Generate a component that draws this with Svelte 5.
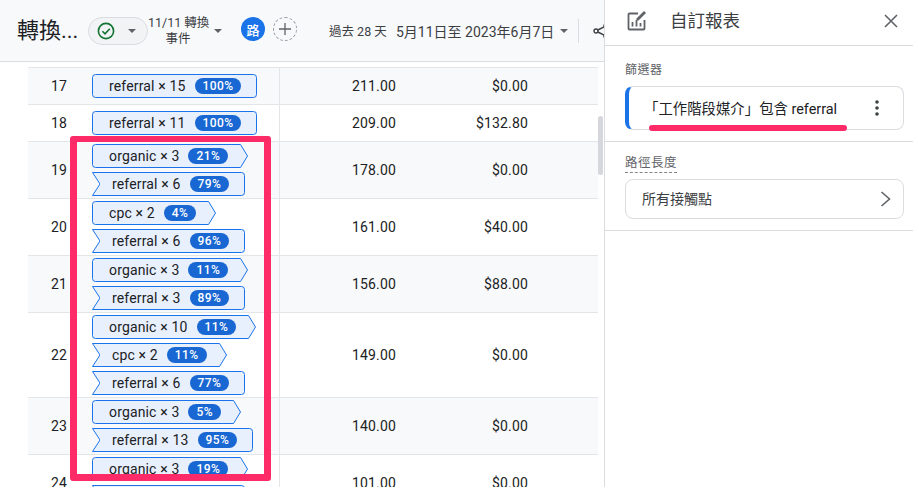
<script lang="ts">
	// chips: [source, count, percent]
	const rows = [
		{ n: 17, conv: '211.00', rev: '$0.00', path: [['referral', 15, '100%']] },
		{ n: 18, conv: '209.00', rev: '$132.80', path: [['referral', 11, '100%']] },
		{ n: 19, conv: '178.00', rev: '$0.00', path: [['organic', 3, '21%'], ['referral', 6, '79%']] },
		{ n: 20, conv: '161.00', rev: '$40.00', path: [['cpc', 2, '4%'], ['referral', 6, '96%']] },
		{ n: 21, conv: '156.00', rev: '$88.00', path: [['organic', 3, '11%'], ['referral', 3, '89%']] },
		{ n: 22, conv: '149.00', rev: '$0.00', path: [['organic', 10, '11%'], ['cpc', 2, '11%'], ['referral', 6, '77%']] },
		{ n: 23, conv: '140.00', rev: '$0.00', path: [['organic', 3, '5%'], ['referral', 13, '95%']] },
		{ n: 24, conv: '101.00', rev: '$0.00', path: [['organic', 3, '19%'], ['referral', 4, '81%']] }
	];
</script>

<div class="page">
	<section class="main">
		<header class="topbar">
			<h1 class="title">轉換...</h1>
			<div class="status">
				<svg class="check" viewBox="0 0 18 18" width="18" height="18">
					<circle cx="9" cy="9" r="7.6" fill="none" stroke="#137333" stroke-width="1.6" />
					<path d="M5.4 9.2l2.6 2.6 4.8-5" fill="none" stroke="#137333" stroke-width="1.6" />
				</svg>
				<span class="caret"></span>
			</div>
			<div class="events">11/11 轉換<br />事件</div>
			<span class="caret events-caret"></span>
			<span class="avatar">路</span>
			<span class="add">
				<svg viewBox="0 0 12 12" width="12" height="12">
					<path d="M6 0v12M0 6h12" stroke="#5f6368" stroke-width="1.3" />
				</svg>
			</span>
			<span class="period">過去 28 天</span>
			<span class="dates">5月11日至 2023年6月7日</span>
			<span class="caret dates-caret"></span>
			<span class="divider"></span>
			<svg class="share" viewBox="0 0 18 18" width="18" height="18">
				<circle cx="3" cy="9" r="2" fill="none" stroke="#3c4043" stroke-width="1.4" />
				<circle cx="13" cy="4" r="2" fill="none" stroke="#3c4043" stroke-width="1.4" />
				<circle cx="13" cy="14" r="2" fill="none" stroke="#3c4043" stroke-width="1.4" />
				<path d="M4.8 8l6.4-3.2M4.8 10l6.4 3.2" stroke="#3c4043" stroke-width="1.4" />
			</svg>
		</header>

		<div class="content">
			<div class="table">
				{#each rows as row, r}
					<div class="row" class:alt={r % 2 === 0} class:single={row.path.length === 1}>
						<div class="rank">{row.n}</div>
						<div class="path">
							{#each row.path as chip, i}
								{@const first = i === 0}
								{@const last = i === row.path.length - 1}
								<div class="chip">
									<svg class="cap" viewBox="0 0 8 24" width="8" height="24">
										{#if first}
											<path d="M8 .5H3.5a3 3 0 0 0-3 3v17a3 3 0 0 0 3 3H8z" fill="#e8f0fe" />
											<path d="M8 .5H3.5a3 3 0 0 0-3 3v17a3 3 0 0 0 3 3H8" fill="none" stroke="#1a73e8" />
										{:else}
											<path d="M8 .5H.5L8 12 .5 23.5H8z" fill="#e8f0fe" />
											<path d="M8 .5H.5L8 12 .5 23.5H8" fill="none" stroke="#1a73e8" />
										{/if}
									</svg>
									<div class="body" class:notched={!first} class:pointed={!last}>
										<span class="label">{chip[0]} × {chip[1]}</span>
										<span class="pct">{chip[2]}</span>
									</div>
									<svg class="cap" viewBox="0 0 8 24" width="8" height="24">
										{#if last}
											<path d="M0 .5h4.500a3 3 0 0 1 3 3v17a3 3 0 0 1-3 3H0z" fill="#e8f0fe" />
											<path d="M0 .5h4.500a3 3 0 0 1 3 3v17a3 3 0 0 1-3 3H0" fill="none" stroke="#1a73e8" />
										{:else}
											<path d="M0 .5h.5L7.500 12 .5 23.500H0z" fill="#e8f0fe" />
											<path d="M0 .5h.5L7.500 12 .5 23.500H0" fill="none" stroke="#1a73e8" />
										{/if}
									</svg>
								</div>
							{/each}
						</div>
						<div class="num conv">{row.conv}</div>
						<div class="num rev">{row.rev}</div>
					</div>
				{/each}
			</div>
			<div class="track"><div class="thumb"></div></div>
		</div>
		<div class="highlight"></div>
	</section>

	<aside class="panel">
		<div class="panel-head">
			<svg class="report-icon" viewBox="0 0 20 20" width="20" height="20">
				<path d="M11 2.500H2.500a1 1 0 0 0-1 1v14a1 1 0 0 0 1 1h14a1 1 0 0 0 1-1V9" fill="none" stroke="#5f6368" stroke-width="1.800" />
				<path d="M5.500 11v4.500M9.500 9v6.500M13.500 12v3.500" stroke="#5f6368" stroke-width="1.800" />
				<path d="M9.500 7.500v2h2L19 2l-2-2z" fill="#5f6368" />
			</svg>
			<span class="panel-title">自訂報表</span>
			<svg class="close" viewBox="0 0 14 14" width="14" height="14">
				<path d="M1 1l12 12M13 1L1 13" stroke="#5f6368" stroke-width="1.600" />
			</svg>
		</div>

		<div class="section filters">
			<div class="section-label">篩選器</div>
			<div class="card filter-card">
				<span>「工作階段媒介」包含 referral</span>
				<svg class="kebab" viewBox="0 0 4 16" width="4" height="16">
					<circle cx="2" cy="2" r="1.800" fill="#3c4043" />
					<circle cx="2" cy="8" r="1.800" fill="#3c4043" />
					<circle cx="2" cy="14" r="1.800" fill="#3c4043" />
				</svg>
				<div class="underline"></div>
			</div>
		</div>

		<div class="section lengths">
			<div class="section-label dashed">路徑長度</div>
			<div class="card length-card">
				<span>所有接觸點</span>
				<svg viewBox="0 0 11 16" width="11" height="16">
					<path d="M1.500 1l8 7-8 7" fill="none" stroke="#5f6368" stroke-width="1.600" />
				</svg>
			</div>
		</div>
	</aside>
</div>

<style>
	:global(body) {
		margin: 0;
		background: #fff;
	}

	.page {
		display: flex;
		width: 913px;
		height: 487px;
		overflow: hidden;
		font-family: Roboto, 'Noto Sans CJK TC', sans-serif;
		color: #202124;
	}

	.main {
		position: relative;
		width: 604px;
		flex: none;
		overflow: hidden;
	}

	.topbar {
		display: flex;
		align-items: center;
		height: 61px;
		padding-left: 17px;
		background: #f8f9fb;
		border-bottom: 1px solid #dadce0;
		white-space: nowrap;
	}

	.title {
		margin: 0;
		width: 71px;
		font-size: 22px;
		font-weight: 400;
		line-height: 28px;
		color: #202124;
		flex: none;
	}

	.status {
		display: flex;
		align-items: center;
		box-sizing: border-box;
		width: 60px;
		height: 28px;
		padding-left: 8px;
		background: #f1f3f4;
		border: 1px solid #dadce0;
		border-radius: 14px;
		flex: none;
		margin-top: 1px;
	}

	.caret {
		display: block;
		width: 0;
		height: 0;
		border-left: 4.500px solid transparent;
		border-right: 4.500px solid transparent;
		border-top: 4.500px solid #5f6368;
		flex: none;
	}

	.status .caret {
		margin-left: 13px;
	}

	.events {
		width: 60px;
		font-size: 12.500px;
		line-height: 15.500px;
		text-align: center;
		color: #3c4043;
		flex: none;
	}

	.events-caret {
		margin-left: 6px;
	}

	.avatar {
		display: flex;
		align-items: center;
		justify-content: center;
		width: 24px;
		height: 24px;
		margin-left: 19px;
		margin-top: -3px;
		border-radius: 50%;
		background: #1a73e8;
		color: #fff;
		font-size: 13px;
		font-weight: 500;
		flex: none;
	}

	.add {
		display: flex;
		align-items: center;
		justify-content: center;
		box-sizing: border-box;
		width: 24px;
		height: 24px;
		margin-left: 8px;
		margin-top: -3px;
		border: 1px dashed #9aa0a6;
		border-radius: 50%;
		flex: none;
	}

	.period {
		width: 67px;
		margin-left: 32px;
		font-size: 12.500px;
		color: #3c4043;
		flex: none;
	}

	.dates {
		width: 162px;
		font-size: 14px;
		color: #3c4043;
		flex: none;
	}

	.dates-caret {
		margin-left: 2px;
	}

	.divider {
		width: 1px;
		height: 24px;
		margin-left: 10px;
		background: #dadce0;
		flex: none;
	}

	.share {
		margin-left: 14px;
		flex: none;
	}

	.content {
		display: flex;
		padding-left: 28px;
		padding-top: 5px;
	}

	.table {
		width: 570px;
		border-top: 1px solid #e3e5e8;
		flex: none;
	}

	.row {
		display: flex;
		align-items: center;
		border-bottom: 1px solid #e3e5e8;
		font-size: 14px;
		letter-spacing: 0.15px;
		color: #202124;
	}

	.row.alt {
		background: #f8f9fa;
	}

	.rank {
		width: 39px;
		text-align: right;
		flex: none;
	}

	.path {
		display: flex;
		flex-direction: column;
		align-items: flex-start;
		align-self: stretch;
		gap: 4px;
		box-sizing: border-box;
		width: 213px;
		padding: 2px 0 2px 25px;
		border-right: 1px solid #e3e5e8;
		flex: none;
	}

	.single .path {
		padding-top: 6px;
		padding-bottom: 6px;
	}

	.chip {
		display: flex;
		height: 24px;
	}

	.cap {
		display: block;
		flex: none;
	}

	.body {
		display: flex;
		align-items: center;
		box-sizing: border-box;
		height: 24px;
		padding-left: 9px;
		padding-right: 8px;
		background: #e8f0fe;
		border-top: 1px solid #1a73e8;
		border-bottom: 1px solid #1a73e8;
		white-space: nowrap;
	}

	.body.notched {
		padding-left: 12px;
	}

	.body.pointed {
		padding-right: 12px;
	}

	.label {
		margin-top: -1px;
		font-size: 14px;
		line-height: 18px;
		letter-spacing: 0.15px;
	}

	.pct {
		display: block;
		margin-left: 9px;
		padding: 0 8px;
		height: 16px;
		line-height: 16px;
		border-radius: 8px;
		background: #1967d2;
		color: #fff;
		font-size: 12px;
		font-weight: 500;
		letter-spacing: 0.4px;
	}

	.num {
		text-align: right;
		flex: none;
	}

	.conv {
		width: 116px;
	}

	.rev {
		width: 132px;
	}

	.track {
		width: 6px;
		flex: none;
	}

	.thumb {
		width: 5px;
		height: 59px;
		margin-top: 49px;
		background: #d5d7dc;
		border-radius: 3px;
	}

	/* pink annotation frame drawn over the rows */
	.highlight {
		position: absolute;
		left: 70px;
		top: 136px;
		box-sizing: border-box;
		width: 201px;
		height: 345px;
		border: 7px solid #ff2a68;
		border-top-width: 6px;
		border-radius: 3px;
	}

	.panel {
		box-sizing: border-box;
		width: 309px;
		border-left: 1px solid #dadce0;
		flex: none;
	}

	.panel-head {
		display: flex;
		align-items: center;
		box-sizing: border-box;
		height: 46px;
		padding-left: 22px;
		padding-bottom: 4px;
		border-bottom: 1px solid #dadce0;
	}

	.panel-title {
		margin-left: 23px;
		margin-bottom: 2px;
		font-size: 17.500px;
		color: #3c4043;
	}

	.close {
		margin-left: auto;
		margin-right: 15px;
	}

	.section {
		padding: 0 8px 0 20px;
		border-bottom: 1px solid #dadce0;
	}

	.filters {
		height: 96px;
		padding-top: 16px;
		box-sizing: border-box;
	}

	.lengths {
		height: 89px;
		padding-top: 13px;
		box-sizing: border-box;
	}

	.section-label {
		width: fit-content;
		font-size: 12px;
		line-height: 16px;
		color: #5f6368;
		letter-spacing: 0.5px;
	}

	.section-label.dashed {
		border-bottom: 1px dashed #80868b;
		padding-bottom: 1px;
		font-size: 12.500px;
	}

	.card {
		display: flex;
		align-items: center;
		box-sizing: border-box;
		width: 279px;
		border: 1px solid #dadce0;
		border-radius: 8px;
		font-size: 14px;
		color: #3c4043;
	}

	.filter-card {
		position: relative;
		height: 44px;
		margin-top: 8px;
		padding-left: 15px;
		padding-bottom: 1px;
		border-left: 4px solid #1a73e8;
		font-size: 14.400px;
		color: #202124;
	}

	.kebab {
		margin-left: auto;
		margin-right: 24px;
	}

	/* pink annotation under the filter text */
	.underline {
		position: absolute;
		left: 20px;
		top: 38px;
		width: 198px;
		height: 6px;
		border-radius: 3px;
		background: #ff2a68;
	}

	.length-card {
		justify-content: space-between;
		height: 40px;
		margin-top: 6px;
		padding: 0 12px 0 16px;
	}

	.length-card span {
		margin-bottom: 3px;
	}
</style>
